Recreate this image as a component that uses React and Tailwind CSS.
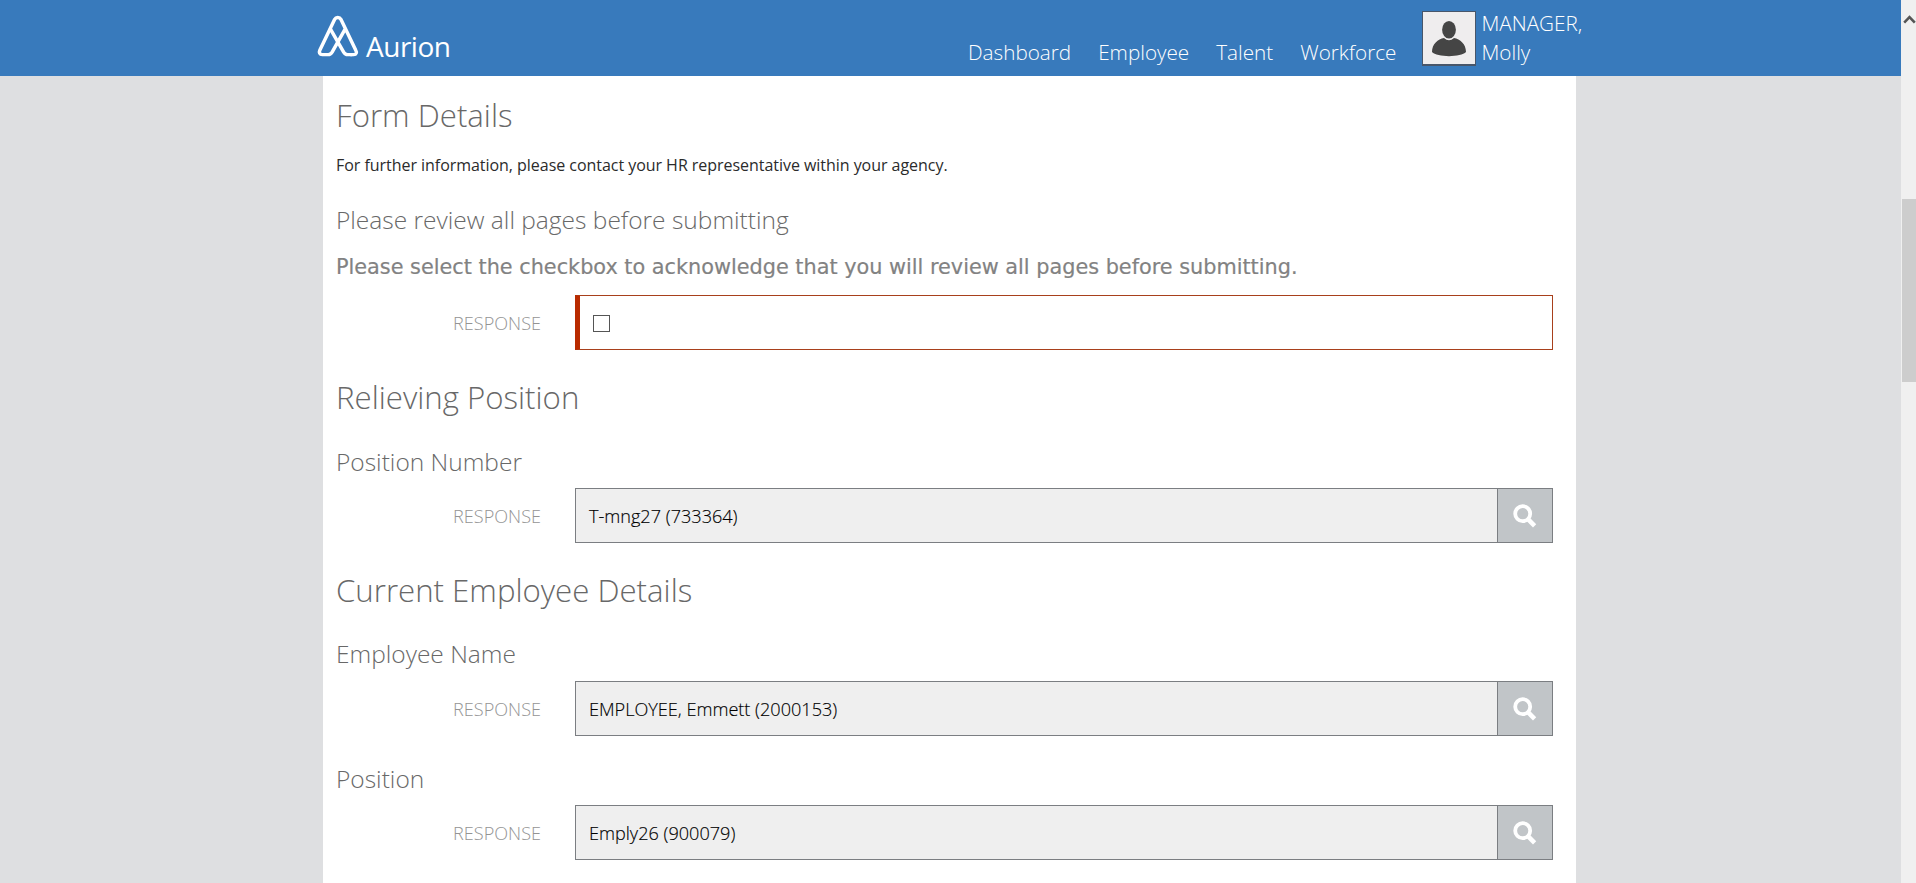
const NAV_ITEMS = ["Dashboard", "Employee", "Talent", "Workforce"];

function LogoMark() {
  return (
    <svg width="46" height="45" viewBox="0 0 44 44" preserveAspectRatio="none" fill="none" stroke="#fff" strokeWidth="3.3" strokeLinecap="round" strokeLinejoin="round">
      <path d="M34.3 38.8 H37 C39.6 38.8 40.2 36.5 39 34.5 L25 4.6 C23.4 1.8 20.2 1.8 18.6 4.6 L4.6 34.5 C3.6 36.7 4.4 38.8 7 38.8 H12.6 C14.4 38.8 15.4 37.9 16.4 36.3 L28.8 13.8" />
      <path d="M14.8 13.8 L27.4 36.3 C28.4 37.9 29.6 38.8 31.2 38.8 H35" />
    </svg>
  );
}

function Avatar() {
  return (
    <div className="h-[55px] w-[54px] border border-b-2 border-[#48566a] bg-[#efedee]">
      <svg width="52" height="52" viewBox="0 0 52 52">
        <path d="M9 40 C9 32 15 27 21 26 Q26 30.5 31 26 C37 27 43 32 43 40 C38 45.5 14 45.5 9 40 Z" fill="#454545" />
        <ellipse cx="26" cy="17.8" rx="8" ry="10" fill="#efedee" />
        <ellipse cx="26" cy="17.8" rx="6.9" ry="8.8" fill="#454545" />
      </svg>
    </div>
  );
}

function SearchIcon() {
  return (
    <svg width="24" height="24" viewBox="0 0 24 24" fill="none" stroke="#fff">
      <circle cx="9.7" cy="9.7" r="7.5" strokeWidth="3.8" />
      <path d="M15.2 15.4 L21.6 21.8" strokeWidth="4.6" />
    </svg>
  );
}

function SectionTitle({ className, children }) {
  return <h2 className={"text-[31.2px] leading-10 text-[#686868] " + className}>{children}</h2>;
}

function FieldTitle({ className, children }) {
  return <h3 className={"text-[24.5px] leading-8 text-[#686868] " + className}>{children}</h3>;
}

function ResponseRow({ className, children }) {
  return (
    <div className={"-ml-px flex h-[55px] items-center gap-[34px] " + className}>
      <span className="w-[206px] text-right text-[18.1px] leading-6 text-[#949494]">RESPONSE</span>
      {children}
    </div>
  );
}

function LookupField({ value }) {
  return (
    <div className="flex h-full w-[978px] border border-[#7b7e82] bg-[#efefef]">
      <div className="flex flex-1 items-center pl-[13px] text-[18.1px] leading-6 text-black [-webkit-text-stroke:0.15px_#000]">{value}</div>
      <button className="flex w-[55px] items-center justify-center border-l border-[#7b7e82] bg-[#c1c5c8]">
        <SearchIcon />
      </button>
    </div>
  );
}

export default function App() {
  return (
    <div className="flex h-[883px] w-[1916px] overflow-hidden bg-white font-['Open_Sans',sans-serif] font-light">
      <div className="flex w-[1901px] flex-col">
        <header className="flex h-[76px] shrink-0 bg-[#387abc] pl-[315px] text-white">
          <div className="flex w-[653px] pt-[15px]">
            <LogoMark />
            <span className="ml-[5px] mt-[13px] text-[28px] font-medium leading-9 tracking-[-0.5px]">Aurion</span>
          </div>
          <nav className="flex gap-[27px] pt-[38px] text-[20.7px] leading-[29px]">
            {NAV_ITEMS.map((item) => (
              <a key={item}>{item}</a>
            ))}
          </nav>
          <div className="ml-[26px] flex gap-[5px] pt-[11px]">
            <Avatar />
            <div className="-mt-[2px] text-[20.7px] leading-[29px]">
              <div>MANAGER,</div>
              <div>Molly</div>
            </div>
          </div>
        </header>
        <div className="flex flex-1 bg-[#dedfe1] pl-[323px]">
          <main className="w-[1253px] bg-white pl-[13px]">
            <SectionTitle className="mt-[19px]">Form Details</SectionTitle>
            <p className="mt-[18px] text-[16px] font-normal leading-6 tracking-[-0.04px] text-[#2b2b2b]">
              For further information, please contact your HR representative within your agency.
            </p>
            <FieldTitle className="mt-[27px]">Please review all pages before submitting</FieldTitle>
            <p className="mt-[17px] font-['DejaVu_Sans',sans-serif] text-[20.8px] font-normal leading-7 text-[#828282] [-webkit-text-stroke:0.2px_#828282]">
              Please select the checkbox to acknowledge that you will review all pages before submitting.
            </p>
            <ResponseRow className="mt-[14px]">
              <div className="flex h-full w-[978px] items-center border border-l-[5px] border-[#a8401c] border-l-[#b92b00] pl-[13px]">
                <span className="mt-[2px] size-[17px] border border-[#555] bg-white" />
              </div>
            </ResponseRow>

            <SectionTitle className="mt-[27px]">Relieving Position</SectionTitle>
            <FieldTitle className="mt-[29px]">Position Number</FieldTitle>
            <ResponseRow className="mt-[10px]">
              <LookupField value="T-mng27 (733364)" />
            </ResponseRow>

            <SectionTitle className="mt-[27px]">Current Employee Details</SectionTitle>
            <FieldTitle className="mt-[28px]">Employee Name</FieldTitle>
            <ResponseRow className="mt-[11px]">
              <LookupField value="EMPLOYEE, Emmett (2000153)" />
            </ResponseRow>
            <FieldTitle className="mt-[27px]">Position</FieldTitle>
            <ResponseRow className="mt-[10px]">
              <LookupField value="Emply26 (900079)" />
            </ResponseRow>
          </main>
        </div>
      </div>
      <div className="flex w-[15px] flex-col items-end bg-[#f0f0f0] pt-[14px]">
        <svg width="13" height="11" viewBox="0 0 13 11" fill="none" stroke="#555" strokeWidth="2.6">
          <path d="M1.2 8.6 L6.5 3.2 L11.8 8.6" />
        </svg>
        <div className="mt-[174px] h-[183px] w-[14px] bg-[#cdcdcd]" />
      </div>
    </div>
  );
}
